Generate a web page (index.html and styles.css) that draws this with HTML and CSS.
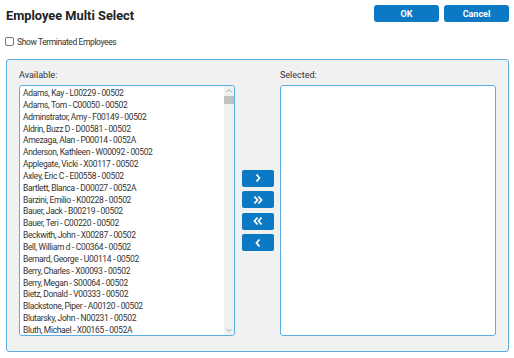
FILE: index.html
```html
<!DOCTYPE html>
<html lang="en">

<head>
    <meta charset="utf-8">
    <title>Employee Multi Select</title>
    <link rel="stylesheet" href="styles.css">
</head>

<body>
    <div class="dialog">
        <div class="header">
            <h1 class="title">Employee Multi Select</h1>
            <div class="actions">
                <button class="btn">OK</button>
                <button class="btn">Cancel</button>
            </div>
        </div>

        <label class="check-row">
            <span class="check-box"></span>
            Show Terminated Employees
        </label>

        <div class="panel">
            <div class="column">
                <div class="col-label">Available:</div>
                <div class="listbox">
                    <ul class="items">
                        <li>Adams, Kay - L00229 - 00502</li>
                        <li>Adams, Tom - C00050 - 00502</li>
                        <li>Adminstrator, Amy - F00149 - 00502</li>
                        <li>Aldrin, Buzz D - D00581 - 00502</li>
                        <li>Amezaga, Alan - P00014 - 0052A</li>
                        <li>Anderson, Kathleen - W00092 - 00502</li>
                        <li>Applegate, Vicki - X00117 - 00502</li>
                        <li>Axley, Eric C - E00558 - 00502</li>
                        <li>Bartlett, Blanca - D00027 - 0052A</li>
                        <li>Barzini, Emilio - K00228 - 00502</li>
                        <li>Bauer, Jack - B00219 - 00502</li>
                        <li>Bauer, Teri - C00220 - 00502</li>
                        <li>Beckwith, John - X00287 - 00502</li>
                        <li>Bell, William d - C00364 - 00502</li>
                        <li>Bernard, George - U00114 - 00502</li>
                        <li>Berry, Charles - X00093 - 00502</li>
                        <li>Berry, Megan - S00064 - 00502</li>
                        <li>Bietz, Donald - V00333 - 00502</li>
                        <li>Blackstone, Piper - A00120 - 00502</li>
                        <li>Blutarsky, John - N00231 - 00502</li>
                        <li>Bluth, Michael - X00165 - 0052A</li>
                    </ul>
                    <div class="scrollbar">
                        <svg class="arrow" width="10" height="10" viewBox="0 0 10 10">
                            <polyline points="2.5,6 5,3.5 7.5,6" />
                        </svg>
                        <div class="track">
                            <div class="thumb"></div>
                        </div>
                        <svg class="arrow" width="10" height="10" viewBox="0 0 10 10">
                            <polyline points="2.5,4 5,6.5 7.5,4" />
                        </svg>
                    </div>
                </div>
            </div>

            <div class="movers">
                <button class="mover" title="Add">
                    <svg width="12" height="10" viewBox="0 0 12 10">
                        <polyline points="4.5,1.5 7.5,5 4.5,8.5" />
                    </svg>
                </button>
                <button class="mover" title="Add all">
                    <svg width="12" height="10" viewBox="0 0 12 10">
                        <polyline points="2.5,1.5 5.5,5 2.5,8.5" />
                        <polyline points="6.5,1.5 9.5,5 6.5,8.5" />
                    </svg>
                </button>
                <button class="mover" title="Remove all">
                    <svg width="12" height="10" viewBox="0 0 12 10">
                        <polyline points="5.5,1.5 2.5,5 5.5,8.5" />
                        <polyline points="9.5,1.5 6.5,5 9.5,8.5" />
                    </svg>
                </button>
                <button class="mover" title="Remove">
                    <svg width="12" height="10" viewBox="0 0 12 10">
                        <polyline points="7.5,1.5 4.5,5 7.5,8.5" />
                    </svg>
                </button>
            </div>

            <div class="column">
                <div class="col-label">Selected:</div>
                <div class="listbox"></div>
            </div>
        </div>
    </div>
</body>

</html>
```

FILE: styles.css
```css
:root {
    --blue: #0b79c3;
    --line: #5aaee0;
    --panel-bg: #f1f1f1;
    --text: #333333;
}

*,
::before,
::after {
    box-sizing: border-box;
    margin: 0;
    padding: 0;
}

body {
    font-family: Roboto, "Liberation Sans", sans-serif;
    color: var(--text);
    background: #ffffff;
}

.dialog {
    width: 514px;
    height: 358px;
    padding: 5px 5px 0 6px;
}

.header {
    display: flex;
    justify-content: space-between;
    align-items: flex-start;
}

.title {
    font-size: 12.8px;
    font-weight: 700;
    color: #222222;
    margin-top: 3px;
    line-height: 16px;
}

.actions {
    display: flex;
    gap: 5px;
}

.btn {
    width: 65px;
    height: 17px;
    border: none;
    border-radius: 3px;
    background: var(--blue);
    color: #ffffff;
    font-family: inherit;
    font-size: 9px;
    font-weight: 700;
}

.check-row {
    display: flex;
    align-items: center;
    gap: 3px;
    margin-top: 13px;
    font-size: 8.5px;
    letter-spacing: -0.4px;
    color: #333333;
    height: 9px;
}

.check-box {
    width: 9px;
    height: 9px;
    border: 1px solid #767676;
    border-radius: 2px;
    background: #ffffff;
    margin-left: -1px;
}

.panel {
    margin-top: 13px;
    width: 503px;
    height: 293px;
    background: var(--panel-bg);
    border: 1px solid var(--line);
    border-radius: 3px;
    padding: 9px 12px 0 12px;
    display: grid;
    grid-template-columns: 216px 45px 216px;
    align-items: start;
}

.column {
    display: flex;
    flex-direction: column;
}

.col-label {
    font-size: 9px;
    line-height: 12px;
    height: 12px;
    margin-bottom: 4px;
    color: #333333;
}

.listbox {
    height: 251px;
    background: #ffffff;
    border: 1px solid var(--line);
    border-radius: 3px;
    display: flex;
    overflow: hidden;
}

.items {
    list-style: none;
    flex: 1;
    padding: 2px 0 0 3px;
    font-size: 8.5px;
    letter-spacing: -0.35px;
    line-height: 11.85px;
    color: #333333;
    white-space: nowrap;
}

.scrollbar {
    width: 10px;
    background: #f0f0f0;
    display: flex;
    flex-direction: column;
    align-items: center;
}

.arrow {
    display: block;
    fill: none;
    stroke: #a3a3a3;
    stroke-width: 1;
}

.track {
    flex: 1;
    width: 100%;
}

.thumb {
    height: 8px;
    background: #c1c1c1;
}

.movers {
    height: 267px;
    display: flex;
    flex-direction: column;
    justify-content: center;
    align-items: center;
    gap: 4.5px;
    padding-top: 16px;
}

.mover {
    width: 32px;
    height: 17px;
    border: none;
    border-radius: 2px;
    background: var(--blue);
    display: flex;
    align-items: center;
    justify-content: center;
}

.mover svg {
    display: block;
    fill: none;
    stroke: #ffffff;
    stroke-width: 1.8;
}
```
